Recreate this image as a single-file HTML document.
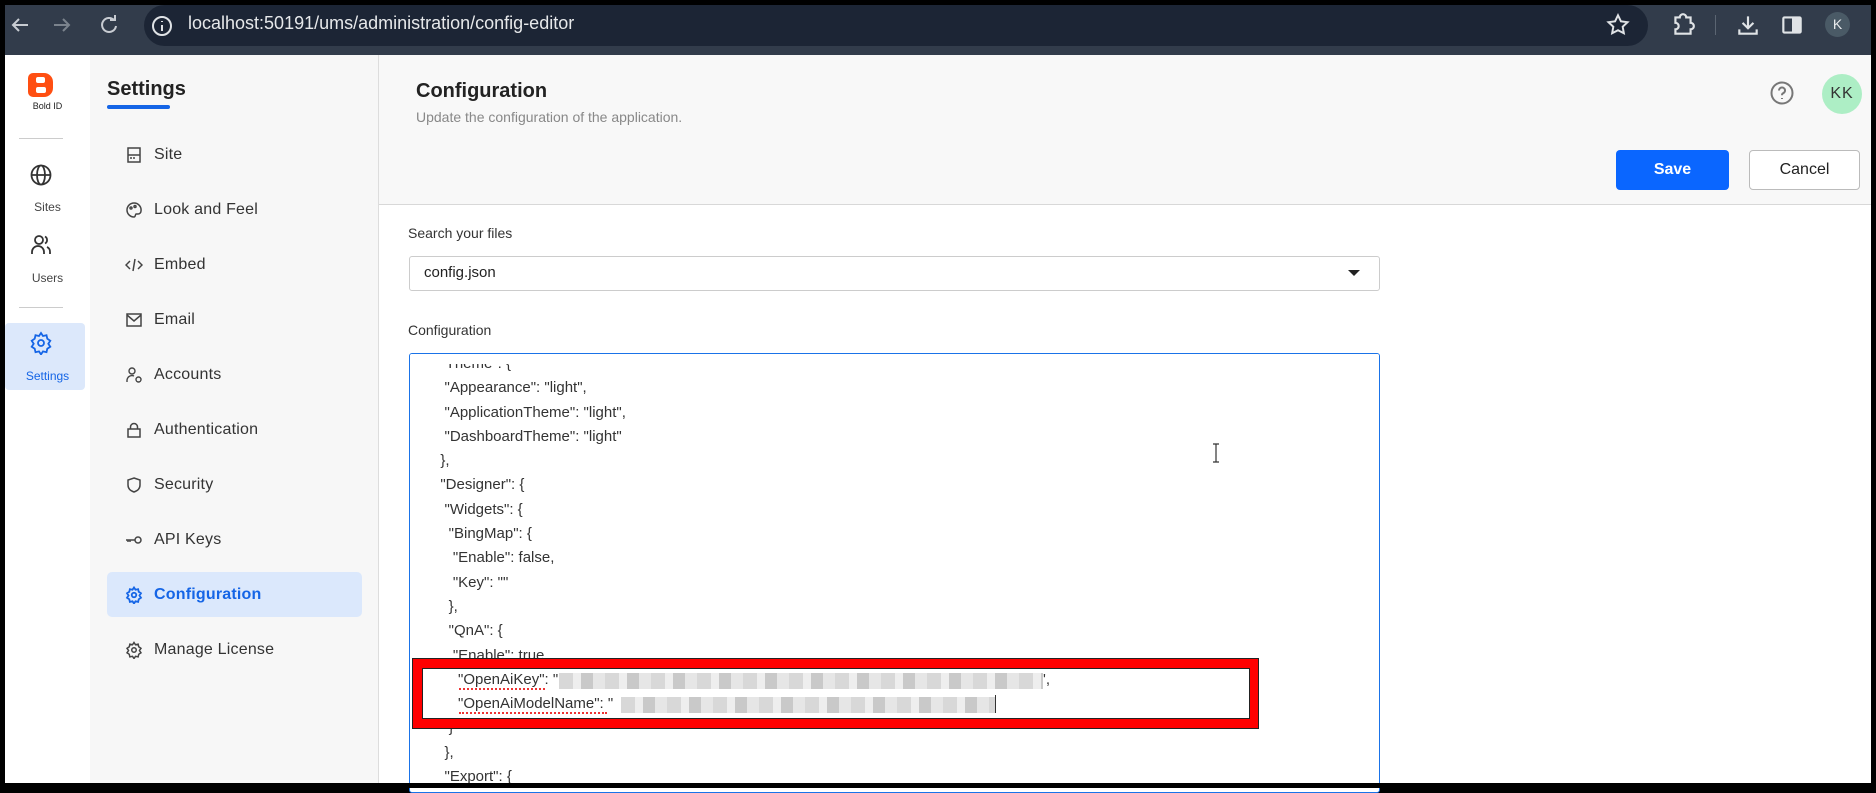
<!DOCTYPE html>
<html><head><meta charset="utf-8"><style>
*{box-sizing:border-box;margin:0;padding:0}
body{width:1876px;height:788px;background:#000;position:relative;overflow:hidden;font-family:"Liberation Sans",sans-serif}
.a{position:absolute}
.bar{left:5px;top:5px;width:1866px;height:50px;background:#323c4b}
.pill{left:144px;top:5px;width:1504px;height:41px;background:#1c2535;border-radius:21px}
.url{left:188px;top:13px;color:#e6e8ea;font-size:18px}
.rail{left:5px;top:55px;width:85px;height:728px;background:#fff}
.side{left:90px;top:55px;width:289px;height:728px;background:#f7f7f7;border-right:1px solid #ddd}
.main{left:379px;top:55px;width:1492px;height:728px;background:#fff}
.hdr{left:379px;top:55px;width:1492px;height:150px;background:#f8f8f8;border-bottom:1px solid #d8d8d8}
.mi{position:absolute;left:154px;font-size:16px;color:#333;letter-spacing:.2px}
.ic{position:absolute;left:125px}
.rl{position:absolute;width:85px;text-align:center;font-size:12px;color:#444;left:5px}
.code{position:absolute;font-size:15px;color:#333;white-space:pre;line-height:24.3px}
.blur{position:absolute;height:16px;background:repeating-linear-gradient(90deg,#d8d8d8 0 14px,#eee 14px 22px,#c9c9c9 22px 34px,#e6e6e6 34px 46px)}
</style></head><body>
<div class="a bar"></div>
<div class="a pill"></div>
<svg class="a" style="left:0;top:5px" width="150" height="40" viewBox="0 0 150 40" fill="none" stroke="#c8ccd2" stroke-width="2">
<path d="M28 20H13M19 14l-6 6 6 6"/><path d="M54 20h15M63 14l6 6-6 6" stroke="#7b838d"/>
<path d="M114 15a7 7 0 1 0 2 6M115 10v5h-5"/>
</svg>
<svg class="a" style="left:150px;top:14px" width="24" height="24" viewBox="0 0 24 24" fill="none" stroke="#dfe2e5" stroke-width="2"><circle cx="12" cy="12" r="9"/><path d="M12 11v6M12 7v1"/></svg>
<div class="a url">localhost:50191/ums/administration/config-editor</div>
<svg class="a" style="left:1605px;top:12px" width="26" height="26" viewBox="0 0 24 24" fill="none" stroke="#e0e3e6" stroke-width="1.8"><path d="M12 3l2.7 5.6 6.1.8-4.5 4.2 1.1 6L12 16.8 6.6 19.6l1.1-6L3.2 9.4l6.1-.8z"/></svg>
<svg class="a" style="left:1670px;top:12px" width="26" height="26" viewBox="0 0 24 24" fill="none" stroke="#e0e3e6" stroke-width="2"><path d="M5 5h4a3 3 0 0 1 6 0h4v5a3 3 0 0 1 0 6v4H5v-4a3 3 0 0 0 0-6z"/></svg>
<div class="a" style="left:1715px;top:15px;width:1px;height:20px;background:#5b6572"></div>
<svg class="a" style="left:1735px;top:12px" width="26" height="26" viewBox="0 0 24 24" fill="none" stroke="#e0e3e6" stroke-width="2"><path d="M12 4v11M7 10l5 5 5-5M4 16v4h16v-4"/></svg>
<svg class="a" style="left:1779px;top:12px" width="26" height="26" viewBox="0 0 24 24"><rect x="4" y="5" width="16" height="14" rx="1" fill="none" stroke="#e0e3e6" stroke-width="2"/><rect x="12" y="5" width="8" height="14" fill="#e0e3e6"/></svg>
<div class="a" style="left:1825px;top:12px;width:25px;height:25px;border-radius:50%;background:#4a5a66;color:#e8eaec;font-size:14px;text-align:center;line-height:25px">K</div>

<div class="a rail"></div>
<div class="a side"></div>
<div class="a main"></div>
<div class="a hdr"></div>

<div class="a" style="left:28px;top:73px;width:25px;height:24px;background:#ff4f12;border-radius:5px 9px 9px 5px"></div>
<div class="a" style="left:36px;top:77px;width:9px;height:6px;background:#fff;border-radius:2px"></div>
<div class="a" style="left:36px;top:87px;width:10px;height:6px;background:#fff;border-radius:2px"></div>
<div class="rl" style="top:101px;font-size:9px;color:#222">Bold ID</div>
<div class="a" style="left:19px;top:138px;width:44px;height:1px;background:#ccc"></div>
<svg class="a" style="left:29px;top:163px" width="24" height="24" viewBox="0 0 24 24" fill="none" stroke="#333" stroke-width="1.8"><circle cx="12" cy="12" r="9.5"/><ellipse cx="12" cy="12" rx="4" ry="9.5"/><path d="M2.5 12h19"/></svg>
<div class="rl" style="top:200px">Sites</div>
<svg class="a" style="left:29px;top:233px" width="24" height="24" viewBox="0 0 24 24" fill="none" stroke="#333" stroke-width="1.8"><circle cx="10" cy="7" r="4"/><path d="M3 21v-2a6 6 0 0 1 12 0v2M16 3.5a4 4 0 0 1 0 7M18 14a5 5 0 0 1 3 5v2"/></svg>
<div class="rl" style="top:271px">Users</div>
<div class="a" style="left:19px;top:307px;width:44px;height:1px;background:#ccc"></div>
<div class="a" style="left:5px;top:323px;width:80px;height:67px;background:#dce8fb;border-radius:4px"></div>
<svg class="a" style="left:29px;top:331px" width="24" height="24" viewBox="0 0 24 24" fill="none" stroke="#1565e6" stroke-width="1.8"><circle cx="12" cy="12" r="3"/><path d="M12 2l2 3 3.5-.8.8 3.5 3 2-2 3 2 3-3 2-.8 3.5-3.5-.8-2 3-2-3-3.5.8-.8-3.5-3-2 2-3-2-3 3-2 .8-3.5 3.5.8z"/></svg>
<div class="rl" style="top:369px;color:#1565e6">Settings</div>

<div class="a" style="left:107px;top:78px;font-size:20px;color:#222;font-weight:bold">Settings</div>
<div class="a" style="left:107px;top:105px;width:63px;height:4px;background:#1565e6;border-radius:2px"></div>

<svg class="ic" style="top:146px" width="18" height="18" viewBox="0 0 18 18" fill="none" stroke="#444" stroke-width="1.5"><rect x="3" y="2" width="12" height="14"/><path d="M3 9h12M5 12h2M8 12h2"/></svg>
<div class="mi" style="top:146px">Site</div>
<svg class="ic" style="top:201px" width="18" height="18" viewBox="0 0 18 18" fill="none" stroke="#444" stroke-width="1.5"><path d="M9 2a7 7 0 1 0 0 14c1.5 0 1-2 2-3h2a3 3 0 0 0 3-3A7 7 0 0 0 9 2z"/><circle cx="6" cy="7" r="1"/><circle cx="10" cy="5.5" r="1"/></svg>
<div class="mi" style="top:201px">Look and Feel</div>
<svg class="ic" style="top:256px" width="18" height="18" viewBox="0 0 18 18" fill="none" stroke="#444" stroke-width="1.5"><path d="M5 5L1 9l4 4M13 5l4 4-4 4M10 3L8 15"/></svg>
<div class="mi" style="top:256px">Embed</div>
<svg class="ic" style="top:311px" width="18" height="18" viewBox="0 0 18 18" fill="none" stroke="#444" stroke-width="1.5"><rect x="2" y="3" width="14" height="12"/><path d="M2 4l7 6 7-6"/></svg>
<div class="mi" style="top:311px">Email</div>
<svg class="ic" style="top:366px" width="18" height="18" viewBox="0 0 18 18" fill="none" stroke="#444" stroke-width="1.4"><circle cx="7" cy="5" r="3"/><path d="M2 16v-2a5 5 0 0 1 7-4"/><circle cx="13.5" cy="13.5" r="2.5"/></svg>
<div class="mi" style="top:366px">Accounts</div>
<svg class="ic" style="top:421px" width="18" height="18" viewBox="0 0 18 18" fill="none" stroke="#444" stroke-width="1.5"><rect x="3" y="8" width="12" height="8"/><path d="M5.5 8V6a3.5 3.5 0 0 1 7 0v2"/></svg>
<div class="mi" style="top:421px">Authentication</div>
<svg class="ic" style="top:476px" width="18" height="18" viewBox="0 0 18 18" fill="none" stroke="#444" stroke-width="1.5"><path d="M9 2l6 2v5c0 4-3 6-6 7-3-1-6-3-6-7V4z"/></svg>
<div class="mi" style="top:476px">Security</div>
<svg class="ic" style="top:531px" width="18" height="18" viewBox="0 0 18 18" fill="none" stroke="#444" stroke-width="1.5"><circle cx="13" cy="9" r="3"/><path d="M1 9h9M3 9v2M5 9v2"/></svg>
<div class="mi" style="top:531px">API Keys</div>
<div class="a" style="left:107px;top:572px;width:255px;height:45px;background:#dbe8fc;border-radius:5px"></div>
<svg class="ic" style="top:586px" width="18" height="18" viewBox="0 0 24 24" fill="none" stroke="#1565e6" stroke-width="2.4"><circle cx="12" cy="12" r="3"/><path d="M12 2l2 3 3.5-.8.8 3.5 3 2-2 3 2 3-3 2-.8 3.5-3.5-.8-2 3-2-3-3.5.8-.8-3.5-3-2 2-3-2-3 3-2 .8-3.5 3.5.8z"/></svg>
<div class="mi" style="top:586px;color:#1565e6;font-weight:bold">Configuration</div>
<svg class="ic" style="top:641px" width="18" height="18" viewBox="0 0 24 24" fill="none" stroke="#444" stroke-width="2"><circle cx="12" cy="12" r="3"/><path d="M12 2l2 3 3.5-.8.8 3.5 3 2-2 3 2 3-3 2-.8 3.5-3.5-.8-2 3-2-3-3.5.8-.8-3.5-3-2 2-3-2-3 3-2 .8-3.5 3.5.8z"/></svg>
<div class="mi" style="top:641px">Manage License</div>

<div class="a" style="left:416px;top:80px;font-size:20px;color:#222;font-weight:bold">Configuration</div>
<div class="a" style="left:416px;top:109px;font-size:14px;color:#888">Update the configuration of the application.</div>
<svg class="a" style="left:1769px;top:80px" width="26" height="26" viewBox="0 0 26 26" fill="none" stroke="#777" stroke-width="2"><circle cx="13" cy="13" r="10.5"/><path d="M10 10.5a3 3 0 1 1 4 2.8c-.8.4-1 1-1 2M13 18v1"/></svg>
<div class="a" style="left:1822px;top:74px;width:40px;height:40px;border-radius:50%;background:#adeec5;color:#333;font-size:16px;text-align:center;line-height:40px;letter-spacing:1px">KK</div>
<div class="a" style="left:1616px;top:150px;width:113px;height:40px;background:#0a66ff;border-radius:4px;color:#fff;font-weight:bold;font-size:16px;text-align:center;line-height:40px">Save</div>
<div class="a" style="left:1749px;top:150px;width:111px;height:40px;background:#fff;border:1px solid #bbb;border-radius:4px;color:#222;font-size:16px;text-align:center;line-height:38px">Cancel</div>

<div class="a" style="left:408px;top:225px;font-size:14px;color:#333">Search your files</div>
<div class="a" style="left:409px;top:256px;width:971px;height:35px;border:1px solid #ccc;border-radius:3px;background:#fff"></div>
<div class="a" style="left:424px;top:264px;font-size:15px;color:#222">config.json</div>
<div class="a" style="left:1348px;top:270px;width:0;height:0;border-left:6px solid transparent;border-right:6px solid transparent;border-top:6px solid #222"></div>
<div class="a" style="left:408px;top:322px;font-size:14px;color:#333">Configuration</div>
<div class="a" style="left:409px;top:353px;width:971px;height:440px;border:1px solid #1a73e8;border-radius:3px;background:#fff;overflow:hidden">
<div class="code" style="left:22px;top:-2px">  "Theme": {
   "Appearance": "light",
   "ApplicationTheme": "light",
   "DashboardTheme": "light"
  },
  "Designer": {
   "Widgets": {
    "BingMap": {
     "Enable": false,
     "Key": ""
    },
    "QnA": {
     "Enable": true,
     "OpenAiKey": "                                  ",
     "OpenAiModelName": "                                  "
    }
   },
   "Export": {</div>
<div class="a" style="left:0;top:0;width:969px;height:10px;background:#fff"></div>
</div>
<svg class="a" style="left:1210px;top:443px" width="12" height="20"><path d="M3 1h6M6 1v18M3 19h6" stroke="#333" stroke-width="1.2"/></svg>
<div class="a" style="left:412px;top:658px;width:847px;height:71px;background:#ff0000;border:1px solid #222"></div>
<div class="a" style="left:422px;top:668px;width:828px;height:51px;background:#fff;border:1px solid #222"></div>
<div class="code" style="left:458px;top:668px">"OpenAiKey": "</div>
<div class="blur" style="left:559px;top:673px;width:484px"></div>
<div class="code" style="left:1043px;top:668px">',</div>
<div class="code" style="left:458px;top:692px">"OpenAiModelName": "</div>
<div class="blur" style="left:621px;top:697px;width:374px"></div>
<div class="a" style="left:995px;top:695px;width:1px;height:18px;background:#333"></div>
<div class="a" style="left:459px;top:688px;width:86px;height:2px;border-bottom:2px dotted #e33"></div>
<div class="a" style="left:459px;top:712px;width:148px;height:2px;border-bottom:2px dotted #e33"></div>
<div class="a" style="left:0;top:783px;width:1876px;height:5px;background:#000"></div>
<div class="a" style="left:1871px;top:0;width:5px;height:788px;background:#000"></div>
</body></html>
